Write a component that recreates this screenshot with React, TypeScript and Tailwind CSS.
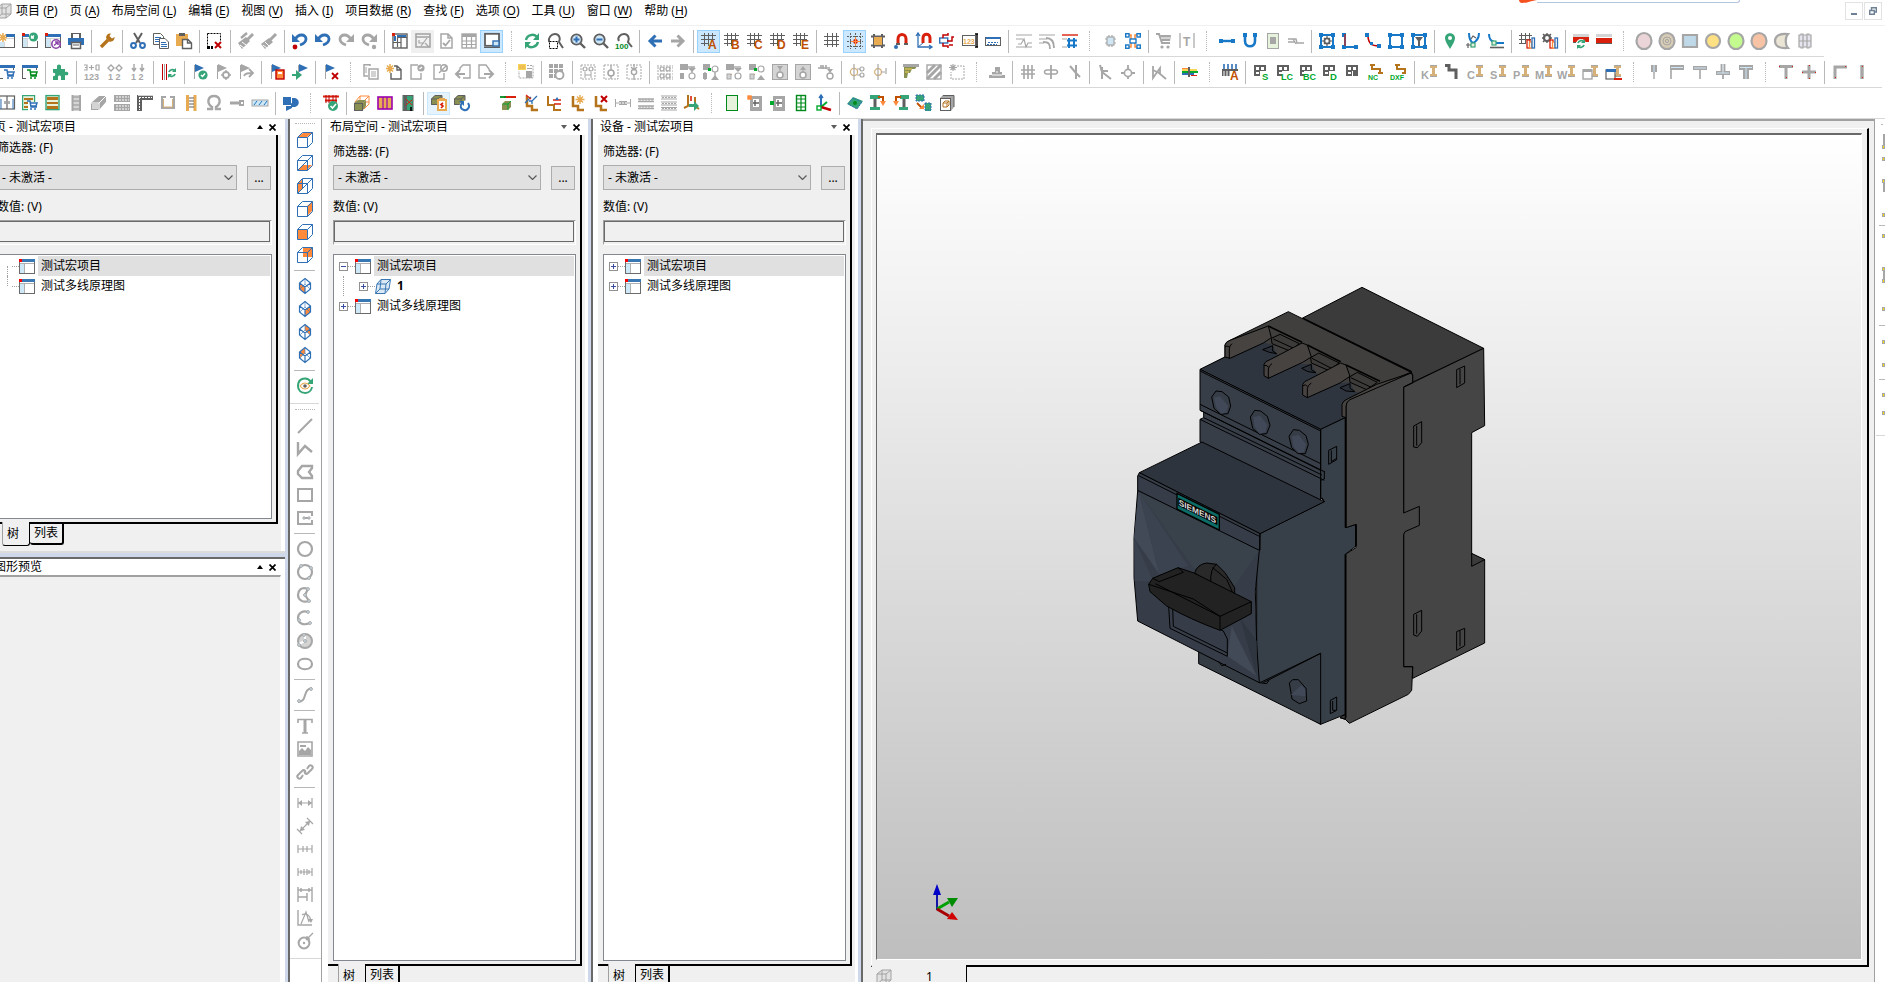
import React from "react";

const COLORS: Record<string, string> = {
  "-": "none",
  g: "#a6a6a6",
  d: "#5f5f5f",
  b: "#2f6fb5",
  r: "#d8200c",
  R: "#c00000",
  n: "#35a477",
  N: "#008a1c",
  e: "#00a82c",
  o: "#e8ab52",
  O: "#ff8a3c",
  w: "#ffffff",
  l: "#cfe6f5",
  y: "#f5d458",
  t: "#b5731c",
  T: "#c05000",
  k: "#000000",
  p: "#8b45a8",
  P: "#9a00b0",
  c: "#1878c8",
  m: "#d6b079",
  s: "#d4d4d4",
  f: "#f2f2f2",
  v: "#8a8f52",
  i: "#e6f2dc",
};

/*
 * Icons are written in a small notation, parts separated by ";":
 *   s color width path                  stroked path
 *   h color path                        dashed path
 *   f color path                        filled path
 *   r fill stroke width x y w h         rectangle
 *   c fill stroke width cx cy radius    circle
 *   t color x y size label              text
 */
const Glyph = ({ code, size = 16 }: { code: string; size?: number }) => (
  <svg viewBox="0 0 16 16" width={size} height={size} className="shrink-0 overflow-visible" aria-hidden="true">
    {code.split(";").map((raw, i) => {
      const p = raw.trim().split(" ");
      switch (p[0]) {
        case "s":
          return <path key={i} d={p.slice(3).join(" ")} stroke={COLORS[p[1]]} strokeWidth={p[2]} fill="none" />;
        case "h":
          return <path key={i} d={p.slice(2).join(" ")} stroke={COLORS[p[1]]} strokeDasharray="2 1" fill="none" />;
        case "f":
          return <path key={i} d={p.slice(2).join(" ")} fill={COLORS[p[1]]} />;
        case "r":
          return (
            <rect key={i} fill={COLORS[p[1]]} stroke={COLORS[p[2]]} strokeWidth={p[3]} x={p[4]} y={p[5]} width={p[6]} height={p[7]} />
          );
        case "c":
          return <circle key={i} fill={COLORS[p[1]]} stroke={COLORS[p[2]]} strokeWidth={p[3]} cx={p[4]} cy={p[5]} r={p[6]} />;
        case "t":
          return (
            <text key={i} x={p[2]} y={p[3]} fontSize={p[4]} fill={COLORS[p[1]]} fontWeight="700" fontFamily="Liberation Sans, sans-serif">
              {p.slice(5).join(" ")}
            </text>
          );
        default:
          return null;
      }
    })}
  </svg>
);

const WIN = "r w d 1 0.5 1.5 15 13;r b - 0 0 1 16 3;r r - 0 0 0 3 3;r l - 0 1 5 4 9;s s 1 M5.5 5V14M1 5.5H15";
const STAR = "s o 1.5 M4 0V9M0 4.5H8M1 1.5L7 7.5M7 1.5L1 7.5";
const GRID = "s d 1 M3.5 0V14M8.5 0V14M12.5 0V14M0 3.5H15M0 7.5H15M0 11.5H15";
const GRIDL = "s d 1 M3.5 0V13M7.5 0V13M11.5 0V7M0 2.5H15M0 6.5H14M0 10.5H8";
const GRIDS = "s d 1 M2.5 0V11M6.5 0V11M10.5 0V6M0 2.5H13M0 6.5H12M0 10.5H7";
const DOC = "f w M3 1H10L14 5V15H3Z;s g 1.5 M3 1H10L14 5V15H3Z M10 1V5H14";
const CUBE = "s b 1 M0.5 5.5L5.5 0.5H15.5V10.5L10.5 15.5H0.5ZM0.5 5.5H10.5V15.5M10.5 5.5L15.5 0.5";
const FLAG = "s g 1 M2.5 1V15";
const CART = "s b 1.5 M5 6H8L9 12H15M8 8H15L14 11H9;c b - 0 9 14 1;c b - 0 13 14 1";
const CARTN = "s N 1.5 M5 6H8L9 12H15M8 8H15L14 11H9;c N - 0 9 14 1;c N - 0 13 14 1";
const RX = "s R 1.8 M9 9L15 15M15 9L9 15";
const LENS = "c l d 1.8 6.5 6.5 5.2;s d 2.4 M10.5 10.5L15 15";
const MACRO = "f d M1 1H13V12H1Z;r w - 0 3 3 3 3;r w - 0 8 3 3 3;r w - 0 3 8 3 2;r w - 0 7 7 1 5";
const DRILL = "f m M8 1H15V4H13V10H15V13H8V10H10V4H8Z;s g 1 M8 1.5H15M8 12.5H15";
const LBR = "s t 2 M2 1V10H8V15H15";
const ANG = "s t 2.5 M4 1L4 11L9 11L9 15L15 15";
const BOX3 = "f v M0 4L4 0H11V6L7 10H0Z;s d 1 M0.5 4L4 0.5H11V6L7 9.5H0.5ZM0.5 4H7V9.5M7 4L11 0.5";
const TRACK = "r s g 1 2 0 12 15";
const HEX = "s b 1.2 M8 0.5L13.5 5V11L8 15.5L2.5 11V5ZM2.5 5L8 9L13.5 5M8 9V15;s b 0.6 M8 1V6L3 11M8 6L13 11";

const ICONS: Record<string, string> = {
  newProj: WIN + ";r w - 0 0 0 7 9;" + STAR,
  openProj: WIN + ";r w - 0 7 0 9 8;c n - 0 11.5 4 4.5;s w 1.3 M9.5 5L12 2.5M9.5 2.5V5H12",
  closeProj: WIN + ";r w - 0 6 7 9 8;c w p 1.6 11 11 4.2;s p 1.5 M9 12.5L12.5 9.5M10 9H13V12",
  print: "f d M3 0H13V5H3Z;r w - 0 5 1 6 4;f b M0 5H16V12H0Z;r w d 1.5 3.5 9.5 9 6;s d 1 M5 12H11",
  wrench: "s t 3.4 M2 14L9 7;f t M7 5C7 2 9 0 12 0.5L10.5 3L13 5.5L15.5 4C16 7 13 9.5 10 8.5Z",
  cut: "s d 2 M4 0L10 10M12 0L6 10;c - b 2 3.5 12.5 2.4;c - b 2 12.5 12.5 2.4",
  copy: "f w M1 1H8L10 3V11H1Z;s d 1 M0.5 0.5H7.5L10.5 3.5V11.5H0.5Z;s b 1 M2 4.5H8M2 6.5H8M2 8.5H6;f w M6 5H12L15 8V15H6Z;s d 1 M6.5 5.5H12L15.5 9V15.5H6.5Z;s b 1 M8 9.5H13M8 11.5H14M8 13.5H14",
  paste: "r o - 0 0 1 12 12;r d - 0 3 0 6 3;f w M6 6H12L15 9V15H6Z;s d 1.4 M6.5 6.5H12L15.5 10V15.5H6.5Z M11.5 7V10H15",
  selDel: "h k M0.5 0.5H13.5V8M0.5 0.5V14.5;r k - 0 0 13 3 3;r k - 0 4 13 2 3;s R 2 M8 9L14 15M14 9L8 15",
  brush1: "f g M0 10L8 4L12 8L4 16Z;s g 3 M9 7L15 1;s w 1 M2 12L6 15M4 9L8 12;s g 2.4 M3 5L9 0",
  brush2: "f g M0 11L8 5L12 9L4 16Z;s g 3 M9 7L15 1;s w 1 M2 12L6 15M4 9L8 13",
  undoDot: "s b 2.8 M3 7C6 0 14 1 14 6C14 9 11 11 8 12;f b M0 1V9H8Z;c R - 0 3 14 2.4",
  undo: "s b 2.8 M3 7C6 0 14 1 14 6C14 9 11 11 8 12;f b M0 1V9H8Z",
  redo: "s g 2.8 M13 7C10 0 2 1 2 6C2 9 5 11 8 12;f g M16 1V9H8Z",
  redoDot: "s g 2.8 M13 7C10 0 2 1 2 6C2 9 5 11 8 12;f g M16 1V9H8Z;c g - 0 13 14 2.2",
  winLay: "r w d 1.4 1 1 14 14;r b - 0 5 2 9 2;r r - 0 0 0 3 3;r b - 0 2 3 2 5;s d 1.2 M5.5 4.5V14M1 9.5H9V5M9 9.5V15M5 4.5H15",
  winGraph: "r f g 1.6 1 1 14 13;s g 1.6 M1 4H15;s g 1.2 M4 7V10H9M12 5L6 13M10 10L14 14",
  docCheck: DOC + ";s g 1.8 M5 10L7.5 12.5L12 7",
  table: "r w g 1.4 1 1 14 14;r g - 0 1 1 14 3;s g 1.2 M1 8H15M1 11.5H15M5.5 2V15M10.5 2V15",
  winActive: "r w d 1.8 1 0.8 14 12;r l b 1.4 9 8 6 5;s d 1 M0 14.5H16",
  refresh: "s n 2.4 M2 7C3 2 10 0 13 4M14 9C13 14 6 16 3 12;f n M15 0V7H9Z;f n M1 16V9H7Z",
  lensSel: "s d 2 M2 9C1 5 4 1 8 1C12 1 14 5 12 9L16 15;h k M2.5 8.5H10.5V15.5H2.5Z",
  zoomIn: LENS + ";s b 2 M6.5 3.5V9.5M3.5 6.5H9.5",
  zoomOut: LENS + ";s b 2 M3.5 6.5H9.5",
  zoom100: "s d 2 M3 8C1 5 4 1 8 1C12 1 14 5 12 9L16 14;t N -1 16 8 100",
  left: "s b 3 M3 8H15M8.5 2.5L3 8L8.5 13.5",
  right: "s g 3 M1 8H13M7.5 2.5L13 8L7.5 13.5",
  gA: GRIDL + ";t T 7 16 12 A",
  gB: GRIDL + ";t T 7 16 12 B",
  gC: GRIDL + ";t T 7 16 12 C",
  gD: GRIDL + ";t T 7 16 12 D",
  gE: GRIDL + ";t T 8 16 12 E",
  grid: GRID,
  gridSnap: "h d M3.5 0V16M8.5 0V16M13.5 0V16M0 3.5H16M0 8.5H16M0 13.5H16;c r - 0 8.5 8.5 2.4;s O 1 M8.5 4V13M4 8.5H13",
  gridObj: "s d 2 M4 1V15M12 1V15M1 3.5H15M1 12.5H15;r o - 0 4 4 8 8",
  magnet: "s r 3 M5 11V6C5 0 13 0 13 6V11;r d - 0 3 10 4 2;r d - 0 11 10 4 2;c b - 0 3 14 2",
  magnetAx: "s r 3 M7 10V5C7 0 14 0 14 5V10;s b 1.3 M2 1V14H15M0 3L2 0L4 3M13 12L16 14L13 16;s b 1 M2 14L7 10",
  conn: "r w b 1.4 0.7 5 8 5;s R 1.5 M4 5V2H9V0M4 10V13H9V15M8 8H13V4H15M14 12H10",
  n123: "r w d 1 0.5 2.5 13 10;t o 1 10.5 7 123;s k 1.4 M15 1V14M13 1H16M13 14H16",
  rulerB: "r w d 1 0.5 4.5 15 8;r b - 0 1 4 14 2;h b M3 9.5H13M2 11.5H12",
  wave1: "s g 1.2 M0 2H16M0 6H7M0 14H16M2 11H5L8 6L10 14L12 10H16",
  wave2: "s g 1.2 M0 2H16M0 6H8M0 10H5;s g 1.8 M4 9C10 9 11 11 11 16M7 5C13 5 15 9 15 15",
  wave3: "s r 1.4 M0 2H16;s g 1.2 M0 6H5M0 14H5;s c 2 M7 5V15M12 5V15M5 7.5H15M5 12.5H15",
  comp: "r l g 1.2 5 4 7 8;s g 1.2 M7 4V2M10 4V2M7 12V14M10 12V14M5 6H3M5 10H3M12 6H14M12 10H14",
  comp4: "s O 1.5 M4 2H6V14H4M12 2H10V14H12;r w c 1.4 5 6 6 4;r w c 1.4 0.7 0.7 3.3 3.3;r w c 1.4 12 0.7 3.3 3.3;r w c 1.4 0.7 12 3.3 3.3;r w c 1.4 12 12 3.3 3.3",
  cart: "s g 2 M0 1H3L6 10H14;f g M4 2H15L14 8H6Z;c g - 0 6 14 1.6;c g - 0 12 14 1.6;s w 1 M5 5H14",
  barT: "s g 1.2 M1 0V15M15 0V15;t g 4 13 12 T",
  lineH: "s c 2.4 M2 8H14;r c - 0 0 6 4 4;r c - 0 12 6 4 4",
  lineU: "s c 2.6 M3 3V8C3 15 13 15 13 8V3;r c - 0 1 0 4 4;r c - 0 11 0 4 4",
  rectG: "r i g 1 2.5 0.5 11 15;r g - 0 5 4 6 7",
  step: "s g 1.4 M0 6H8L9 10H16M0 9H7M5 6L8 11",
  cGear: "r w c 2 2 2 12 12;r c - 0 0 0 4 4;r c - 0 12 0 4 4;r c - 0 0 12 4 4;r c - 0 12 12 4 4;c w d 1.8 8 8 2.6;s d 1.2 M8 3V5M8 11V13M3 8H5M11 8H13M5 5L6 6M10 10L11 11M11 5L10 6M5 11L6 10",
  cL: "s c 2 M3 2V14H15;r c - 0 0 0 4 4;r c - 0 0 12 4 4;r c - 0 12 12 4 4;s r 1.2 M3 1V13",
  cCurve: "s R 1.6 M3 2C3 10 6 13 14 13;r c - 0 0 0 4 4;r c - 0 12 11 4 4;r c - 0 5 9 3 3",
  cSq: "r w c 2 2 2 12 12;r c - 0 0 0 4 4;r c - 0 12 0 4 4;r c - 0 0 12 4 4;r c - 0 12 12 4 4",
  cFun: "r w c 2 2 2 12 12;r c - 0 0 0 4 4;r c - 0 12 0 4 4;r c - 0 0 12 4 4;r c - 0 12 12 4 4;f d M4 4H12L9 8V13H7V8Z",
  pin: "f n M8 16C5 11 3 8 3 5C3 -1.5 13 -1.5 13 5C13 8 11 11 8 16Z;c w - 0 8 5 2",
  vee: "s c 2 M4 0C4 5 5 8 8 10M14 0C14 5 12 8 8 10;s d 1.2 M1 12H6M3 10V15M11 5L8 3L6 6;r i n 1.2 6 10 4 4",
  ell: "s c 2 M1 1C1 6 3 8 6 9M7 10H16;s d 1.6 M2 14.5H16;r i n 1.2 4 8 4 4",
  books: GRIDS + ";r w r 1.3 8 7 3 8;r w O 1.3 10.5 9 2.5 6;r w b 1.3 13 5 2.5 10",
  gearBooks: "c w d 2.2 5 5 3;s d 1.4 M5 0V2M5 8V10M0 5H2M8 5H10M1 1L3 3M7 7L9 9M9 1L7 3M1 9L3 7;r w r 1.3 8 7 3 8;r w O 1.3 10.5 9 2.5 6;r w b 1.3 13 5 2.5 10",
  redRef: "r s - 0 0 1 16 3;r r - 0 0 4 16 5;r d - 0 0 9 3 1;c w - 0 8 11 5;s n 1.8 M5 10C6 7 10 7 11 9M11 12C10 15 6 15 5 13;f n M12 6V10H8Z;f n M4 16V12H8Z",
  redBar: "r s - 0 0 1 16 3;r r - 0 0 5 16 5;r d - 0 0 10 16 1",
  cab: "r w d 1.2 0.5 1 15 13;s d 1.2 M8 1V14;s b 1 M2 14V4M14 14V4;s d 1 M6 6V9M10 6V9",
  docCart: "r i n 1.2 0.6 0.6 12 14;r t - 0 2 3 9 2;r t - 0 2 7 6 2;r t - 0 2 11 5 2;r w - 0 6 7 10 9;" + CART,
  rack: "r i n 1.4 1 0.6 13 14;r t - 0 2 2 11 3;r t - 0 2 7 11 2;r t - 0 2 11 11 3",
  rail: "r s - 0 4 0 9 16;s g 2 M4.5 0V16M12 0V16;s g 1.4 M5 2H12M5 6H12M5 10H12M5 14H12",
  boxG: "f g M0 8L8 1H15V7L8 15H0Z;s w 1 M0 8H8L15 1M8 8V15;r s - 0 1 9 6 5",
  plates: "r g - 0 0 0 16 7;r g - 0 0 9 16 7;h w M2 2H15M2 5H15M2 11H15M2 14H15",
  corner: "f d M0 0H16V5H5V16H0Z;h w M2 2.5H15M2.5 2V15;s s 1 M16 0.5H1",
  brack: "s g 2 M6 2H2V13H14V2H10;s m 1 M3.5 4V12H12.5V4",
  railO: "r w - 0 3 0 10 16;s o 3 M4.5 0V16M12 0V16;s d 1.2 M6 3H11M6 6H11M6 9H11M6 12H11",
  omega: "s g 2.4 M1 14H6V12C0 8 2 1 8 1C14 1 16 8 10 12V14H15",
  screw: "s g 3 M1 8H10;r g - 0 10 5 5 6;r w - 0 12 7 2 2",
  strip: "r l g 1 0 5 16 6;s c 1 M2 10L5 6M7 10L10 6M12 10L15 6",
  shapes: "r b - 0 0 2 8 8;f b M9 3H12C17 4 17 11 12 12H9Z;f b M3 16V11L9 8V13Z;s w 1 M8.5 2V8M0 10.5H8",
  redCheck: "s r 2 M0 1.5H16M2 5.5H14;s R 1 M3 0V8M6 0V8M10 0V8M13 0V8;c n - 0 10 11 5;s w 1.6 M7.5 11L9.5 13L13 9",
  boxO: "s O 1 M6 1H15V9M6 1L1 7M15 1L9 7M6 1V7M15 9L10 14M6 7H15;r v d 1 0.5 8.5 8 7;f v M0 8L4 5H12L9 8Z;f v M9 8L12 5V11L9 15Z",
  purple: "r o P 1.6 1 2 14 12;s P 1.2 M6 2V14M10 2V14",
  teal: "r n d 1 3 0.5 10 15;r d - 0 4 0 3 16;s r 1 M6 4L12 10M6 10L12 5;s k 1.6 M11 12V16",
  boxClip: BOX3 + ";r w o 2 7 5 8 10;r o - 0 8 3 6 3;s r 1.6 M12 8L10 9.5L12 11L10 13",
  boxRef: BOX3 + ";c w - 0 11 11 5.5;s b 2 M14 8C17 12 13 16 10 15C6 14 6 10 8 8;f b M5 6H10V11Z",
  redGrn: "s r 2 M4 2H16;s N 1.8 M0 2H6;f v M2 9L5 6H11V12L8 15H2Z;s e 1 M2.5 9H8V15M8 9L11 6",
  lb: ANG + ";s b 1.3 M2 8L8 2M14 1L8 7M6 6H9V9;s r 1.2 M3 0L8 4",
  lr: LBR + ";s r 1.6 M7 5H15M8 9H15;f b M9 5L11 2L13 5Z",
  lstar: ANG + ";s o 1.4 M11 0V9M6.5 4.5H15.5M8 1.5L14 7.5M14 1.5L8 7.5",
  lx: ANG + ";s R 2 M9 1L15 7M15 1L9 7",
  dim1: "s g 1 M0.5 4V12M15.5 4V12M1 8H15;r g - 0 4 6 8 4;h w M4 8H12",
  dim2: "s g 1.3 M0 4H16M0 6.5H16M0 11H16M0 13.5H16;h g M1 5H15M1 12H15",
  dim3: "s g 1.1 M0 1H16M0 4H16M0 7H16M0 10H16M0 12.5H16M0 15H16;h g M1 2.5H15M1 8.5H15M1 13.5H15",
  plug: "s t 2 M4 0V11L0 13M11 2V11L15 14;s r 1.6 M7 1V6;f n M5 9H10V6L15 11L10 16V12H5Z",
  gRect: "r i N 1 2.5 0.5 11 15",
  gOr: "r g - 0 3 1 12 15;r O O 1.4 1 1 3 3;r w - 0 6 4 6 8;s d 1.4 M8 5V11M6 8H12",
  gGr: "r g - 0 3 1 12 15;r e - 0 0 6 4 4;r w - 0 6 4 6 8;s d 1.4 M8 5V11M6 8H12",
  gGrid: "r w N 1.4 3.5 0.5 9 15;s N 1.2 M8 1V15M4 4H12M4 8H12M4 12H12",
  axes: "s b 2 M5 12V1;s b 1.4 M3 3L5 0L7 3;s e 2 M5 12L11 7;s R 2.4 M5 12L15 15;r w e 1.4 1 11 4 4",
  diam: "f n M0 9L6 2L16 6L10 14Z;h b M1 9L6 3L15 7L10 14Z;c N - 0 8 8 2",
  pipe1: "r n - 0 0 0 10 4;s d 3 M5 4V13;r n - 0 0 12 10 3;s T 2 M8 2H13V7;f O M10 6H16L13 11Z",
  pipe2: "r n - 0 7 0 9 4;s d 3 M11 4V12;r n - 0 6 12 9 3;s T 2 M8 2H3V7;f O M0 6H6L3 11Z",
  sqs: "r n - 0 0 0 8 6;r n - 0 9 8 6 8;h b M0 0H8V6H0ZM9 8H15V15H9Z;s T 1.8 M1 8L6 13;f O M3 14H8V9Z",
  cubeO: "f g M1 3L4 0H15V12L12 16H1Z;r w d 1 1.5 3.5 10 12;s t 1 M4 8L6 6H10V10L8 12H4ZM4 8H8V12M8 8L10 6;s d 1 M4 0.5H15V12",
};

const shape = (fill: string, d: string) => (
  <svg viewBox="0 0 16 16" width={16} height={16} className="shrink-0 overflow-visible" aria-hidden="true">
    <path d={d} fill={fill} stroke="#a6a6a6" strokeWidth="2.2" />
  </svg>
);
const ROUND = "M8 0A7.5 8 0 1 1 8 16A7.5 8 0 1 1 8 0Z";

const MORE: Record<string, string> = {
  winCart: "r w d 1 0.5 1.5 14 13;r b - 0 0 1 16 3;r w - 0 4 6 12 10;" + CART,
  winCartN: "r w d 1 0.5 1.5 14 13;r b - 0 0 1 16 3;r w - 0 4 6 12 10;" + CARTN,
  puzzle: "f n M0 5H4V3C3 -0.5 9 -0.5 8 3V5H12V8C16.5 6 16.5 13 12 11V16H8V13C8 11 5 11 5 13V16H0V12C3 13 3 8 0 9Z",
  num1: "s g 1.2 M0 1H3V6H0M1 3.5H3M5 3.5H10M7.5 1V6M12 1H15V6H12M12 1V6;t g 0 16 9 123",
  num2: "s g 1.3 M1 4L4 1L7 4L4 7ZM9 4L12 1L15 4L12 7Z;t g 1 16 9 1 2",
  num3: "s g 1.4 M4 0V7M12 0V7M2 4L4 7L6 4M10 4L12 7L14 4;t g 1 16 9 1 2",
  barsRef: "s R 1 M1.5 0V16M5.5 0V16;s g 1 M3.5 0V16;s n 1.8 M8 8C9 5 13 5 14 7M14 10C13 13 9 13 8 11;f n M15 4V8H11Z;f n M7 14V10H11Z",
  flagOk: FLAG + ";f b M3 0L12 4L3 8Z;c n - 0 11 11 4.6;s w 1.5 M9 11L10.5 12.5L13 9.5",
  flagGear: FLAG + ";f g M3 0L12 4L3 8Z;c w g 1.8 11 11 3;s g 1.4 M11 6V8M11 14V16M6 11H8M14 11H16",
  flagArr: FLAG + ";f g M3 0L12 4L3 8Z;s g 1.8 M6 12C7 9 10 9 14 9M11 5L15 9L11 13",
  flagBook: FLAG + ";f b M3 0L12 4L3 8Z;r O R 1.4 7 6 8 9;r w - 0 9 8 4 2",
  flagIn: "s g 1 M6.5 1V9;f b M7 0L16 4L7 8Z;s n 2 M0 11H7;f n M4 6L10 11L4 16Z",
  flagX: FLAG + ";f b M3 0L12 4L3 8Z;" + RX,
  docList: "f w M1 1H7V12H1Z;s g 1.5 M7 2V0.7H1V12H5;r w g 1.5 6 5 9 10;s g 1 M8 8H13M8 10H13M8 12H13M3 3V9",
  docStar: "f w M5 1H11L15 5V15H5Z;s d 1.4 M8 2H11L15 5.5V15H5V9M11 2V6H15;" + STAR,
  docRef: "s g 1.4 M9 1H2V15H12V9;c g - 0 12 4 3.6;s w 1.2 M10.5 5L13 3",
  docArr: "s g 1.4 M9 1H2V15H12V9;c w g 1.6 12 4 3.2;s g 1.4 M10 6L14 2M7 9L11 5",
  docL: "s g 1.4 M5 6V4L8 1H15V14H8;s g 2 M1 10H10M5 6L1 10L5 14",
  docR: "s g 1.4 M11 6V5L8 1H1V14H8;s g 2 M6 10H14M11 6L15 10L11 14",
  note: "h g M9 1.5H15V14H1V7;r y - 0 0 0 8 6;s o 1 M1 2H7M1 4H7;r g - 0 8 7 6 7;s g 1 M9 4.5H14",
  gridGear: "r g - 0 0 0 14 14;s w 1 M4.5 0V14M9.5 0V14M0 4.5H14M0 9.5H14;c w g 1.8 10.5 11 4",
  dotA: "h g M1 1H15V15H1Z;c w g 1.2 5 5 2;c w g 1.2 11 5 2;s g 1 M5 8V14M11 8V14M5 11H11",
  dotB: "h g M1 1H15V15H1Z;c w g 1.6 8 9 3;s g 1.3 M8 1V6M8 12V15",
  dotC: "h g M1 1H15V15H1Z;c w g 1.4 8 8 2.6;s g 1.3 M8 0V5M8 11V16M5 3L8 6L11 3",
  dbl: "h g M0 2H16M0 4H16M0 7H16M0 10H16M0 13H16M0 15H16;c w g 1.2 5 5 2;c w g 1.2 11 5 2;c w g 1.2 5 12 2;c w g 1.2 11 12 2",
  mA: "r g - 0 0 0 8 6;s g 1.4 M8 3H15M12 3V9;r g - 0 0 9 4 6;c w g 1.2 12 12 3;f g M8 4H16L12 8Z",
  mB: "r g - 0 0 0 7 6;r e - 0 5 4 3 3;c w g 1.2 12 5 3;s g 1.4 M2 8V16M12 8V12;r g - 0 0 9 4 6;f g M8 16L12 11L16 16Z",
  mC: "r g - 0 0 0 8 6;s g 1.4 M8 3H15;f g M8 4H16L12 8Z;s O 1 M1 15L6 10;r s g 1 1 10 4 5;c w g 1.2 12 12 3",
  mD: "r g - 0 0 0 7 6;r e - 0 5 4 3 3;c w g 1.2 12 5 3;s O 1 M1 15L6 10;r s g 1 1 10 4 5;f g M8 16L12 11L16 16Z",
  mE: "r s g 1 0.5 0.5 15 15;c w g 1.6 8 11 3;f g M5 2H11L8 6Z;s g 1 M8 5V9",
  mF: "r s g 1 0.5 0.5 15 15;c w g 1.6 8 11 3;f g M5 6H11L8 2Z;s g 1 M8 5V9",
  mG: "s g 1.6 M0 4H3V1M5 5V1M8 5V1M3 4H12;c w g 1.4 12 12 3;f g M9 5H15L12 9Z",
  pA: "c w m 1.2 5 8 3.6;s g 1.2 M5 0V16M8 5H12M8 11H12;c w g 1.2 13 5 2;c w g 1.2 13 11 2",
  pB: "c w m 1.2 6 8 3.4;s g 1.2 M6 0V16M9 8H13M14 4V10",
  tri: "f v M1 1H15L12 5H9L7 9H5L4 14H1Z;r g - 0 0 0 16 3;s y 1 M2 5H9M2 8H6",
  hatch: "r w g 1.4 1 1 14 14;s g 3 M1 9L9 1M1 15L15 1M8 15L15 8",
  dotStar: "h g M8 2H15V15H2V8;s g 1.2 M4 0V7M0 3.5H8M1.5 1L6.5 6M6.5 1L1.5 6",
  bell: "f g M6 3H11V8H13V11H16V14H0V11H3V8H6Z;s w 1 M3 11H13M7 8H9",
  l3: "s g 1.6 M4 1V15M8 1V15M12 1V15;s g 1.4 M1 6H15M1 10H15",
  phi: "s g 1.8 M8 1V15;s g 1.6 M3 6H13M3 10H13M3 6C1 7 1 9 3 10M13 6C15 7 15 9 13 10",
  slash: "s g 2 M10 1V15M4 2L10 9M10 9L14 13",
  tapA: "s g 2 M3 1L5 8L14 15M5 7H11M5 3V15",
  crossC: "s g 1.8 M8 1V15M1 9H15;c w g 1.6 8 9 3.6",
  tapB: "s g 1.8 M2 2V14L9 4V10M2 6L8 9L15 15",
  rainbow: "s y 2 M0 6H15;s O 1 M0 4.5H7;s e 2 M0 8H16;s b 2 M0 10H12;s r 1 M9 11.5H15;s d 2 M7 3V13",
  tray: "r d - 0 0 5 16 7;s b 1.6 M2 0V5M6 0V5M10 0V5M14 0V5;s w 1 M2 7V12M5 7V12M8 7V12;r w - 0 8 7 8 9;t T 8 16 12 A",
  mS: MACRO + ";r w - 0 8 7 8 9;t e 9 16 9.5 S",
  mLC: MACRO + ";r w - 0 6 7 9 9;t e 5 16 9 LC",
  mBC: MACRO + ";r w - 0 5 7 10 9;t e 4 16 9 BC",
  mD2: MACRO + ";r w - 0 8 7 8 9;t e 8 16 9.5 D",
  m0: MACRO,
  nc: "s t 2 M4 1V5H12V9M2 1H7M10 9H15;t e 0 16 7 NC",
  dxf: "s t 2 M6 1V5H14V9M4 1H9M11 9H15;t e -1 16 7 DXF",
  fK: DRILL + ";t g -1 15 11 K",
  fArr: "s d 3 M0 1.5H4V6H11V15",
  fC: DRILL + ";t g -1 15 11 C",
  fS: DRILL + ";t g -1 15 11 S",
  fP: DRILL + ";t g -1 15 11 P",
  fM: DRILL + ";t g -2 15 11 M",
  fW: DRILL + ";t g -3 15 11 W",
  fWin: DRILL + ";r w g 1.4 0 6 9 9;r g - 0 0 5 9 3",
  fWinR: DRILL + ";r w d 1.2 0 6 9 9;r b - 0 0 5 10 3;r r - 0 8 14 8 2",
  q1: "r g - 0 5 1 6 7;s l 1 M8 1V10;s g 1.4 M8 8V15",
  q2: "r g - 0 1 1 14 5;s l 1 M2 3.5H14;s g 1.6 M2 5V15",
  q3: "r g - 0 1 2 14 4;s l 1 M2 4H14;s g 1.6 M8 5V15",
  q4: "r g - 0 1 7 14 4;s l 1 M2 9H14M8 0V9;s g 1.8 M6.5 0V7M9.5 0V7M8 11V15",
  q5: "r g - 0 1 1 14 5;r g - 0 5 5 6 10;s l 1 M2 3.5H14M8 4V15",
  w1: "s g 3 M1 2.5H15M8 2V15;r r - 0 1 2 1 1;r r - 0 14 2 1 1;r r - 0 8 13 1 1",
  w2: "s g 3 M1 8H15M8 1V15;r r - 0 1 8 1 1;r r - 0 14 8 1 1;r r - 0 8 1 1 1;r r - 0 8 14 1 1",
  w3: "s g 3 M3 15V3H15;r r - 0 13 2 1 1;r r - 0 3 13 1 1",
  w4: "s g 3.4 M7 1V15;r r - 0 7 2 1 1;r r - 0 7 13 1 1",
};

const SIDE: Record<string, string> = {
  cu1: "f O M1 5L6 1H15L10 5Z;" + CUBE,
  cu2: "f O M1 15L6 10H15L10 15Z;" + CUBE + ";s b 1 M1 15L15 1",
  cu3: "f O M1 5L6 1V10L1 15Z;" + CUBE + ";s b 1 M1 15L15 1M5.5 1V10",
  cu4: "f O M10 5L15 1V10L10 15Z;" + CUBE,
  cu5: "f O M1 5H10V15H1Z;" + CUBE,
  cu6: "f O M6 1H15V10H6Z;" + CUBE,
  di1: "f O M2.5 5L8 9V15L2.5 11Z;" + HEX,
  di2: "f O M8 9L13.5 5V11L8 15Z;" + HEX,
  di3: "f O M8 1L13.5 5V11L8 6Z;" + HEX,
  di4: "f O M8 1L2.5 5V11L8 6Z;" + HEX,
  eye: "s n 2 M15 9C14 17 1 17 1 8C1 0 10 -2 14 4;f n M16 0V6H10Z;f w M3 8L8 5L13 8L8 11Z;s o 1.2 M3 8C6 4 10 4 13 8C10 12 6 12 3 8Z;c d - 0 8 8 1.8",
  line: "s g 2 M1 15L15 1",
  poly: "s g 2.4 M1 1V13L8 5L15 11",
  pgon: "s g 2.4 M15 2H5L1 7V10L5 14H15V12L12 8L15 4Z",
  rect: "s g 2 M1 2H15V14H1Z",
  rect2: "s g 2 M15 10V14H1V2H15V6M7 8H12;c l g 1 7 8 1.2;c l g 1 12 8 1.2",
  c1: "c - g 2.2 8 8 7",
  c2: "c - g 2.2 8 8 7;c l g 1 4 2 1.4;c l g 1 14 4 1.4;c l g 1 12 14 1.4",
  c3: "s g 2.2 M11 2C4 -1 1 4 1 8C1 13 6 16 12 14L8 8L11 2;c l g 1 11 2 1.4;c l g 1 8 8 1.4;c l g 1 12 14 1.4",
  c4: "s g 2.2 M11 2C6 0 1 3 1 8C1 13 6 16 13 13;c l g 1 11 2 1.4;c l g 1 2 10 1.4;c l g 1 13 13 1.4",
  c5: "c s g 2 8 8 7;s w 2 M2 11L8 8V2;c l g 1 7 2 1.4;c l g 1 8 8 1.4;c l g 1 2 12 1.4",
  el: "s g 2.2 M1 8C1 1 15 1 15 8C15 15 1 15 1 8Z",
  spl: "s g 2 M1 15C11 15 5 2 15 1;c l g 1 2 14 1.4;c l g 1 14 2 1.4",
  txt: "s g 1.6 M1 5V1.5H15V5M5 15H11;s g 3 M8 1V15",
  img: "s g 1.6 M1 1H15V15H1Z;f g M2 14V10L5 7L8 10L11 6L14 9V14Z;f g M3 4H9V6H3Z",
  link: "s g 2 M10 5L12 2C14 0 17 3 15 5L11 9C9 11 7 9 8 8M6 11L4 14C2 16 -1 13 1 11L5 7C7 5 9 7 8 8",
  d1: "s g 1.2 M1 3V13M15 3V13M1 8H15;f g M1 8L5 5V11ZM15 8L11 5V11Z",
  d2: "s g 1.2 M3 13L13 3M0 11L5 16M10 0L16 6;f g M3 13L4 8L8 12ZM13 3L8 4L12 8Z",
  d3: "s g 1.2 M1 4V12M15 4V12M6 5V11M10 5V11M1 8H15",
  d4: "s g 1.2 M1 4V12M15 4V12M4 6V10M7 5V11M10 5V11M12 6V10M1 8H15",
  d5: "s g 1.4 M1 0V15M15 0V15M1 3H15M1 10H10M10 6V14M4 1V5M12 1V5",
  d6: "s g 1.4 M1 0V15H15;s g 1.2 M4 14L9 2L12 12M5 5C9 2 13 5 14 11;f g M11 9H16L14 13Z",
  d7: "c w g 2 7 10 5.4;c g - 0 7 10 1.2;s g 1.4 M9 7L16 0M10 3V6H13",
};

const SHAPES: Record<string, React.ReactNode> = {
  g1: shape("#ecd5d8", ROUND),
  g2: (
    <svg viewBox="0 0 16 16" width={16} height={16} className="shrink-0 overflow-visible" aria-hidden="true">
      <path d={ROUND} fill="#d8ccb4" stroke="#a6a6a6" strokeWidth="2.2" />
      <circle cx="8" cy="8" r="4" fill="none" stroke="#a6a6a6" />
      <circle cx="8" cy="8" r="1.6" fill="none" stroke="#a6a6a6" />
    </svg>
  ),
  g3: shape("#bfd9e8", "M1 2H15V14H1Z"),
  g4: shape("#ffe083", "M8 1A7 7 0 1 1 8 15A7 7 0 1 1 8 1Z"),
  g5: shape("#c3fb8f", ROUND),
  g6: shape("#f8c3a4", ROUND),
  g7: shape("#ebe5d6", "M14 1C4 0 1 4 1 8C1 12 4 16 14 15C11 12 11 4 14 1Z"),
  g8: (
    <svg viewBox="0 0 16 16" width={16} height={16} className="shrink-0 overflow-visible" aria-hidden="true">
      <path
        d="M2 2H4V1H6V2H10V1H12V2H14V14H12V15H10V14H6V15H4V14H2ZM6 2V14M10 2V14M2 8H14"
        fill="#e4e4ee"
        stroke="#a6a6a6"
        strokeWidth="1.2"
      />
    </svg>
  ),
};

const ALL: Record<string, string> = { ...ICONS, ...MORE, ...SIDE };

const HILITE: Record<string, string> = {
  winActive: "bg-[#cce8ff] border border-[#99d1ff]",
  gA: "bg-[#cce8ff] border border-[#99d1ff]",
  gridSnap: "bg-[#cce8ff] border border-[#99d1ff]",
  winGraph: "bg-[#f0f0f0]",
  boxClip: "bg-[#e5f3ff] border border-[#cce8ff]",
};

const ROW1 =
  "newProj openProj closeProj print | wrench | cut copy paste | selDel | brush1 brush2 | undoDot undo redo redoDot | winLay winGraph docCheck table winActive : refresh lensSel zoomIn zoomOut zoom100 | left right | gA gB gC gD gE | grid gridSnap gridObj magnet magnetAx conn n123 rulerB | wave1 wave2 wave3 : comp comp4 | cart barT : lineH lineU rectG step | cGear cL cCurve cSq cFun | pin vee ell | books gearBooks | redRef redBar : g1 g2 g3 g4 g5 g6 g7 g8";
const ROW2 =
  "winCart winCartN | puzzle | num1 num2 num3 | barsRef | flagOk flagGear flagArr | flagBook flagIn | flagX : docList docStar docRef docArr docL docR : note | gridGear | dotA dotB dotC | dbl mA mB mC mD mE mF mG | pA pB | tri hatch dotStar : bell | l3 phi slash | tapA crossC | tapB | rainbow : tray | mS mLC mBC mD2 m0 nc dxf | fK fArr fC fS fP fM fW fWin fWinR : q1 q2 q3 q4 q5 : w1 w2 | w3 w4";
const ROW3 =
  "cab docCart rack rail boxG plates corner brack railO omega screw strip | shapes : redCheck | boxO purple teal | boxClip boxRef _ redGrn lb lr lstar lx dim1 dim2 dim3 plug : gRect gOr gGr gGrid axes | diam pipe1 pipe2 sqs cubeO";
const COLUMN =
  "cu1 cu2 cu3 cu4 cu5 cu6 | di1 di2 di3 di4 | eye : line poly pgon rect rect2 | c1 c2 c3 c4 c5 el | spl | txt img link | d1 d2 d3 d4 d5 d6 d7";

const ToolButton = ({ id }: { id: string }) => (
  <button
    type="button"
    aria-label={id}
    className={`flex h-[23px] w-[23px] shrink-0 items-center justify-center ${HILITE[id] ?? ""}`}
  >
    {SHAPES[id] ?? <Glyph code={ALL[id]} />}
  </button>
);

const ToolRow = ({ items }: { items: string }) => (
  <div role="toolbar" className="-ml-[5px] flex h-[31px] w-fit items-center border-b border-[#d8d8d8] pr-2">
    {items.split(" ").map((id, i) => {
      if (id === "|")
        return (
          <span key={i} className="flex w-2 shrink-0 justify-center">
            <span className="h-[23px] w-px bg-[#b8b8b8]" />
          </span>
        );
      if (id === ":")
        return (
          <span key={i} className="flex w-[17px] shrink-0 justify-center">
            <span className="h-5 border-l border-dotted border-[#b8b8b8]" />
          </span>
        );
      if (id === "_") return <span key={i} className="w-[23px] shrink-0" />;
      return <ToolButton key={i} id={id} />;
    })}
  </div>
);

const MENUS: [string, string][] = [
  ["项目", "P"],
  ["页", "A"],
  ["布局空间", "L"],
  ["编辑", "E"],
  ["视图", "V"],
  ["插入", "I"],
  ["项目数据", "R"],
  ["查找", "F"],
  ["选项", "O"],
  ["工具", "U"],
  ["窗口", "W"],
  ["帮助", "H"],
];

const CubeGray = () => (
  <svg viewBox="0 0 16 16" width={16} height={16} className="shrink-0" aria-hidden="true">
    <path d="M1 5L6 1H15V11L10 15H1Z" fill="#e2e2e2" />
    <path d="M1 5L6 1H15V11L10 15H1ZM1 5H10V15M10 5L15 1M6 1V11H15M6 11L1 15" fill="none" stroke="#a2a2a2" />
  </svg>
);

const MenuBar = () => (
  <header className="flex h-[26px] shrink-0 items-start border-b border-[#f0f0f0]">
    <div className="-ml-1 flex h-[22px] w-5 items-center">
      <CubeGray />
    </div>
    <nav className="flex h-[22px] items-center gap-3">
      {MENUS.map(([label, key]) => (
        <button key={key} type="button" className="whitespace-nowrap leading-4">
          {label} (<span className="underline underline-offset-2">{key}</span>)
        </button>
      ))}
    </nav>
    <div className="ml-auto mr-[105px] flex w-[221px] items-start">
      <svg viewBox="0 0 18 3" width={18} height={3} aria-hidden="true">
        <path d="M0 0H18C12 1 8 3 3 3C1 3 0 1 0 0Z" fill="#f4511e" />
      </svg>
      <span className="h-[3px] flex-1 rounded-br-sm border-r border-b border-[#b4c6e0]" />
    </div>
    <div className="mt-[2px] mr-[3px] flex gap-px">
      <button type="button" aria-label="最小化" className="flex h-[18px] w-[18px] items-center justify-center border border-[#e2e2e2]">
        <span className="mt-[6px] h-[2px] w-[6px] bg-[#6d8094]" />
      </button>
      <button type="button" aria-label="还原" className="flex h-[18px] w-[18px] items-center justify-center border border-[#e2e2e2]">
        <svg viewBox="0 0 8 8" width={8} height={8} aria-hidden="true">
          <path d="M2.5 3V0.8H7.3V5H5.5M0.7 3.5H5.3V7.3H0.7Z" fill="none" stroke="#6d8094" strokeWidth="1.4" />
        </svg>
      </button>
    </div>
  </header>
);

const WinIcon = () => (
  <svg viewBox="0 0 16 15" width={16} height={15} className="shrink-0" aria-hidden="true">
    <rect x="0.5" y="0.5" width="15" height="14" fill="#fff" stroke="#6b6b6b" />
    <rect x="1" y="4" width="4" height="10" fill="#cfe8f8" />
    <path d="M1 4.5H15M5.5 5V14" stroke="#b0b0b0" />
    <rect width="16" height="3" fill="#3a78b4" />
    <rect width="3" height="3" fill="#ff0000" />
  </svg>
);

const CubeBlue = () => (
  <svg viewBox="0 0 16 15" width={16} height={15} className="shrink-0" aria-hidden="true">
    <path d="M1 5L5 1H15L14 10L10 14H1Z" fill="#dbe9f5" />
    <path d="M2 5L6 0.5H15.5L14 10L10 14.5H0.5ZM2 5H11L15.5 0.5M11 5L10 14.5M6 0.5L5 10H14M5 10L0.5 14.5" fill="none" stroke="#3a78b4" />
  </svg>
);

type Node = { label: string; depth: number; toggle?: "+" | "-"; cube?: boolean; selected?: boolean };

const Toggle = ({ kind }: { kind: "+" | "-" }) => (
  <button
    type="button"
    aria-label={kind === "+" ? "展开" : "折叠"}
    className="flex h-[9px] w-[9px] shrink-0 items-center justify-center border border-[#919191] bg-white"
  >
    <svg viewBox="0 0 5 5" width={5} height={5} aria-hidden="true">
      <path d={kind === "+" ? "M0 2.5H5M2.5 0V5" : "M0 2.5H5"} stroke="#3b4fa0" />
    </svg>
  </button>
);

const Tree = ({ nodes }: { nodes: Node[] }) => (
  <ul role="tree" className="min-h-0 flex-1 border border-[#828790] bg-white p-px">
    {nodes.map((n, i) => (
      <li key={i} role="treeitem" aria-selected={!!n.selected} className="flex h-5 items-center pl-1">
        {n.depth > 0 && (
          <span className="flex w-5 shrink-0 self-stretch pl-1">
            <span className="border-l border-dotted border-[#a0a0a0]" />
          </span>
        )}
        {n.toggle ? (
          <Toggle kind={n.toggle} />
        ) : (
          <span className={`flex w-[9px] shrink-0 self-stretch pl-1 ${i === 0 ? "items-end" : "items-start"}`}>
            <span className="h-[10px] flex-1 border-l border-dotted border-[#a0a0a0]" />
          </span>
        )}
        <span className="w-[7px] shrink-0 border-t border-dotted border-[#a0a0a0]" />
        {n.cube ? <CubeBlue /> : <WinIcon />}
        <span
          className={`ml-[3px] flex flex-1 items-center self-stretch whitespace-nowrap pl-[3px] ${n.selected ? "bg-[#e0e0e0]" : ""} ${
            n.cube ? "font-bold" : ""
          }`}
        >
          {n.label}
        </span>
      </li>
    ))}
  </ul>
);

const CloseMark = () => (
  <svg viewBox="0 0 7 7" width={7} height={7} aria-hidden="true">
    <path d="M0.5 0.5L6.5 6.5M6.5 0.5L0.5 6.5" stroke="#000" strokeWidth="1.7" />
  </svg>
);

const PanelTitle = ({ title, up, className }: { title: string; up?: boolean; className: string }) => (
  <div className={`flex h-4 shrink-0 items-center bg-white pr-px pl-[2px] ${className}`}>
    <h2 className="flex-1 whitespace-nowrap leading-4">{title}</h2>
    <button type="button" aria-label="窗口位置" className="flex w-[10px] items-center justify-center">
      <svg viewBox="0 0 6 4" width={6} height={4} aria-hidden="true">
        <path d={up ? "M0 4L3 0L6 4Z" : "M0 0H6L3 4Z"} fill={up ? "#000" : "#5c5c5c"} />
      </svg>
    </button>
    <button type="button" aria-label="关闭" className="flex w-[15px] items-center justify-center">
      <CloseMark />
    </button>
  </div>
);

const Tabs = ({ tall }: { tall?: boolean }) => (
  <div role="tablist" className={`flex shrink-0 items-start overflow-visible pl-[10px] ${tall ? "h-[27px]" : "h-4"}`}>
    <button
      role="tab"
      type="button"
      aria-selected="true"
      className="relative -mt-[2px] h-6 w-[28px] rounded-b-[3px] border-r border-b border-l border-black border-l-[#a0a0a0] bg-[#f0f0f0] pl-1 text-left"
    >
      树
    </button>
    <button role="tab" type="button" aria-selected="false" className="-mt-px h-[22px] w-[34px] rounded-b-[3px] border-r-2 border-b-2 border-black">
      列表
    </button>
  </div>
);

const Panel = ({ id, title, nodes, up, className }: { id: string; title: string; nodes: Node[]; up?: boolean; className: string }) => (
  <section className={`flex min-h-0 flex-col overflow-clip bg-[#f0f0f0] ${className}`}>
    <PanelTitle title={title} up={up} className="mr-0" />
    <div className={`mr-[3px] flex min-h-0 flex-1 flex-col border-r-2 border-b-2 border-black pr-1 pb-[3px] pl-[5px] ${up ? "pt-[5px]" : "pt-[9px]"}`}>
      <label htmlFor={`${id}-filter`} className="leading-4">
        筛选器: (F)
      </label>
      <div className={`flex items-end gap-[10px] pr-px ${up ? "mt-[9px]" : "mt-[5px]"}`}>
        <div className="relative flex-1">
          <select
            id={`${id}-filter`}
            className="block h-[25px] w-full appearance-none border border-[#adadad] bg-[#e1e1e1] pl-1 leading-4 outline-none"
          >
            <option>- 未激活 -</option>
          </select>
          <svg viewBox="0 0 9 5" width={9} height={5} className="pointer-events-none absolute top-[10px] right-1" aria-hidden="true">
            <path d="M0.5 0.5L4.5 4.5L8.5 0.5" fill="none" stroke="#5a5a5a" strokeWidth="1.2" />
          </svg>
        </div>
        <button type="button" aria-label="编辑筛选器" className="h-6 w-6 border border-[#adadad] bg-[#e1e1e1] leading-4">
          ...
        </button>
      </div>
      <label htmlFor={`${id}-value`} className="mt-[9px] leading-4">
        数值: (V)
      </label>
      <div className="mt-[5px] h-[25px] border border-white border-t-[#a0a0a0] border-l-[#a0a0a0] pr-px pb-[2px]">
        <input id={`${id}-value`} type="text" className="block h-[21px] w-full border border-[#696969] bg-[#f0f0f0] px-1 outline-none" />
      </div>
      <div className="mt-[9px] flex min-h-0 flex-1 flex-col">
        <Tree nodes={nodes} />
      </div>
    </div>
    <Tabs tall={up} />
  </section>
);

const Splitter = () => <div className="w-[5px] shrink-0 border-r-2 border-[#696969] bg-[#cfd7ea]" />;

const Breaker = () => (
  <svg viewBox="0 0 1200 1410" width={400} height={470} className="absolute top-[136px] left-[233px]" role="img" aria-label="3D">
    <g stroke="#000" strokeWidth="3" strokeLinejoin="round">
      <path d="M756 49L1121 232L905 335L578 141Z" fill="#3b3b3b" />
      <path d="M1121 232L1124 464L1085 485V850L1124 866V1116L908 1222L881 1187V348Z" fill="#454545" />
      <path d="M1085 847L1124 866L1085 886Z" fill="#3b3b3b" />
      <path d="M535 122L905 305L908 312V335L700 430L345 260V222Q347 214 360 208Z" fill="#403f3e" />
      <path d="M578 141L905 302" fill="none" strokeWidth="4" />
      <path
        d="M270 295L358 250L460 214L488 222L500 250L560 280L604 278L618 305L680 338L720 334L735 362L770 368L708 400L706 440L632 475Z"
        fill="#2f353f"
        stroke="none"
      />
      <path d="M345 258L270 295L632 475L706 440" fill="none" />
      <path d="M270 295L632 475V692L270 513V445L281 440V423L270 418Z" fill="#373e48" />
      <path d="M632 475L706 440V770L738 760V825L706 850V1330L632 1360L440 1240V800L450 788L643 692L632 680Z" fill="#373f48" />
      <path d="M708 400Q710 390 720 384L900 305L908 312V335L881 348V726L928 706V763L885 782L881 790V1187H908L905 1258L895 1270L718 1357L706 1345V850L738 830V760L708 770Z" fill="#454545" />
      <path d="M690 1340L706 1330V1345Z" fill="#3b3b3b" />
      <path d="M270 300L632 480M270 400L632 578M270 418L632 598M281 423L643 602M281 440L636 612M270 445L643 628" fill="none" />
      <path d="M632 475V598M643 600V624L632 628V680M636 680L643 692" fill="none" />
      <path d="M88 605L276 513L643 692L450 788Z" fill="#2e343d" />
      <path d="M266 1140V1178L632 1360V1147L450 1235Z" fill="#353c44" />
      <path d="M88 605L450 788L448 838L436 960L440 1120L448 1235L83 1050L72 920V800L83 660V615Z" fill="#363d48" />
    </g>
    <path d="M86 662L148 910L72 800Z" fill="#424957" />
    <path d="M86 662L235 885L148 910Z" fill="#3c4350" />
    <path d="M72 800L130 930L74 930Z" fill="#3b4250" />
    <path d="M86 662L448 838L370 950L250 890Z" fill="#39414b" />
    <path d="M365 1065L440 1215L352 1155Z" fill="#424957" />
    <path d="M390 1040L440 1110V1215Z" fill="#30363f" />
    <g stroke="#000" strokeWidth="3" fill="none" strokeLinejoin="round">
      <path d="M86 614L450 797M83 658L448 838M450 788V838" />
      <path d="M707 440V770M707 850V1340M738 760V825" strokeWidth="5" />
      <path d="M632 1147L460 1235M448 1235L470 1238L478 1226M325 1170L335 1184L348 1180" />
      <path d="M176 1005L180 1072L352 1156V1104L340 1080L330 1075M188 1010L190 1066L352 1146" />
    </g>
    <g stroke="#000" strokeWidth="3" strokeLinejoin="round">
      <path d="M484 202L510 190L568 218L540 240L486 218Z" fill="#3d3b3a" />
      <path d="M602 260L626 246L688 276L655 298L604 276Z" fill="#3d3b3a" />
      <path d="M718 318L742 304L802 334L770 356L720 334Z" fill="#3d3b3a" />
      <path d="M490 204L560 236M606 262L672 296M722 320L786 350" fill="none" />
      <path d="M458 236L488 224V240L500 248L478 244ZM575 292L604 280V296L618 305L594 302ZM690 350L720 338V352L735 362L708 360Z" fill="#2b3038" />
      <path d="M345 258V222Q347 212 360 208L475 165L484 200L460 216L360 262Z" fill="#464341" />
      <path d="M358 262V234Q358 224 366 218M345 228Q350 222 358 228" fill="none" />
      <path d="M462 314V280Q465 270 480 266L576 216L592 222L604 258L578 274L475 322Z" fill="#464341" />
      <path d="M475 322V294Q476 284 486 278M462 284Q468 280 475 288" fill="none" />
      <path d="M578 372V340Q582 330 596 326L692 276L708 282L720 316L690 336L592 380Z" fill="#464341" />
      <path d="M592 380V352Q594 342 604 336M579 344Q586 338 592 346" fill="none" />
      <path d="M696 436V400Q700 388 712 384L800 340L905 305L720 386Q709 392 708 405V440Z" fill="#464341" />
      <path d="M475 165L576 214M592 222L692 272M708 282L810 331" strokeWidth="5" fill="none" />
    </g>
    <g stroke="#000" strokeWidth="3" fill="#363d47">
      <path d="M305 378L318 360L336 362L356 378L362 405L354 428L332 430L312 412Z" />
      <path d="M421 438L434 418L452 420L472 436L480 463L470 488L448 490L428 472Z" />
      <path d="M537 496L550 476L568 478L588 494L595 520L586 548L564 548L545 530Z" />
      <path d="M538 1236L548 1226H565L588 1252L590 1290L568 1298L546 1284Z" />
    </g>
    <path
      d="M312 380L330 376L354 404L350 424L334 428L318 408ZM430 438L450 434L472 462L466 484L450 488L434 468ZM546 496L566 492L588 520L582 544L566 546L550 526ZM542 1272L575 1242L586 1256L586 1276Z"
      fill="#414857"
    />
    <g stroke="#000" strokeWidth="3" fill="none">
      <path d="M656 538L680 526V566L656 580ZM664 538V572L680 562M661 1288L680 1278V1318L661 1328ZM668 1290V1318H678" />
      <path d="M1040 296L1064 285V336L1040 350ZM1050 294V340M1040 1082L1064 1072V1124L1040 1138ZM1050 1080V1126" />
      <path d="M911 465L935 452V515L922 530L911 528ZM920 464V524M911 1030L935 1018V1080L922 1096L911 1092ZM920 1030V1088" />
      <path d="M881 348L908 335M881 1187H908V1222M690 1340L706 1345" />
    </g>
    <path d="M201 667L328 730V777L201 714Z" fill="#0d6b66" stroke="#000" strokeWidth="4" />
    <path d="M205 680L322 738V762L205 704Z" fill="#000" />
    <text transform="matrix(1 0.496 0 1 206 702)" fontSize="25" fontWeight="700" fontFamily="Liberation Sans, sans-serif" fill="#d8d8d8">
      SIEMENS
    </text>
    <g stroke="#000" strokeWidth="3" strokeLinejoin="round">
      <path d="M254 905Q262 880 290 876L320 880L345 905L374 950V970L300 940Z" fill="#292929" />
      <path d="M320 880Q300 890 302 940M308 890L350 925L368 965" fill="none" />
      <path d="M116 940L128 922L204 890L252 906L424 992V1028L330 1078Q240 1045 170 1005L120 962Z" fill="#222222" />
      <path d="M116 940L250 984L330 1036L424 992M330 1036V1078M128 922L148 932L220 904L204 890M136 938L330 1036" fill="none" />
    </g>
  </svg>
);

const AxisTriad = () => (
  <svg viewBox="0 0 28 40" width={28} height={40} className="absolute bottom-[35px] left-[54px]" aria-hidden="true">
    <path d="M6 26V10" stroke="#1414a8" strokeWidth="2" />
    <path d="M6 0L10 11H2Z" fill="#0000c8" />
    <path d="M6 25L18 18" stroke="#00a000" strokeWidth="3" />
    <path d="M16 14L27 14L21 23Z" fill="#008c00" />
    <path d="M6 25L18 32" stroke="#a80000" strokeWidth="3" />
    <path d="M21 28L27 36L16 35Z" fill="#d00000" />
  </svg>
);

const Viewport = () => (
  <main className="flex min-w-0 flex-1 flex-col border-t-2 border-r border-[#a0a0a0] bg-[#f0f0f0] pt-[7px] pr-[5px] pl-2">
    <div className="flex min-h-0 flex-1 border-r-2 border-b-2 border-l border-t border-black border-t-white border-l-white p-1 pr-[5px] pb-[5px]">
      <div className="relative min-w-0 flex-1 overflow-hidden border border-t-2 border-white border-t-[#696969] border-l-[#696969] bg-linear-to-b from-white to-[#bebebe]">
        <Breaker />
        <AxisTriad />
      </div>
    </div>
    <div role="tablist" className="flex h-[15px] shrink-0 items-start">
      <button
        role="tab"
        type="button"
        aria-selected="true"
        className="relative -mt-[2px] ml-px flex h-6 w-[95px] items-center border-r border-black bg-[#f0f0f0] pl-1"
      >
        <CubeGray />
        <span className="ml-[34px]">1</span>
      </button>
    </div>
  </main>
);

const EDGE = [26, 38, 60, 94, 115, 148, 160, 188, 221, 244, 274, 292];
const RightStrip = () => (
  <aside className="w-[10px] shrink-0 overflow-hidden bg-white">
    <svg viewBox="0 0 10 330" width={10} height={330} aria-hidden="true">
      <path d="M6 5.5H8" stroke="#b8b8b8" />
      <path d="M4 106.5H10M4 206.5H10M4 260.5H10" stroke="#b8b8b8" />
      <path d="M1 316.5H10" stroke="#d8d8d8" />
      <path d="M9 15V27M9 60V73M9 150V164" stroke="#a6a6a6" strokeWidth="2" />
      {EDGE.map((y) => (
        <g key={y}>
          <rect x="7" y={y} width="3" height="4" fill="#a6a6a6" />
          <rect x="8" y={y + 1} width="1" height="2" fill="#ffe000" />
        </g>
      ))}
    </svg>
  </aside>
);

const SideTools = () => (
  <div role="toolbar" aria-orientation="vertical" className="w-[32px] shrink-0 overflow-hidden border-r border-[#a0a0a0] bg-white">
    <div className="flex flex-col items-center border-b border-[#d8d8d8] pr-[2px] pb-[6px]">
      <span className="my-1 w-5 border-t border-dotted border-[#b8b8b8]" />
      {COLUMN.split(" ").map((id, i) => {
        if (id === "|")
          return (
            <span key={i} className="flex h-2 w-full items-center px-1">
              <span className="h-px flex-1 bg-[#b8b8b8]" />
            </span>
          );
        if (id === ":")
          return (
            <span key={i} className="flex h-[17px] w-full flex-col items-center border-[#d8d8d8] pt-[6px]">
              <span className="h-px w-full bg-[#d8d8d8]" />
              <span className="mt-[5px] w-5 border-t border-dotted border-[#b8b8b8]" />
            </span>
          );
        return <ToolButton key={i} id={id} />;
      })}
    </div>
  </div>
);

const PAGE_TREE: Node[] = [
  { label: "测试宏项目", depth: 0, selected: true },
  { label: "测试多线原理图", depth: 0 },
];
const LAYOUT_TREE: Node[] = [
  { label: "测试宏项目", depth: 0, toggle: "-", selected: true },
  { label: "1", depth: 1, toggle: "+", cube: true },
  { label: "测试多线原理图", depth: 0, toggle: "+" },
];
const DEVICE_TREE: Node[] = [
  { label: "测试宏项目", depth: 0, toggle: "+", selected: true },
  { label: "测试多线原理图", depth: 0, toggle: "+" },
];

export default function App() {
  return (
    <div className="flex h-screen flex-col overflow-hidden bg-white font-['Noto_Sans','Noto_Sans_CJK_SC',sans-serif] text-[12px] leading-4 text-black">
      <MenuBar />
      <div className="shrink-0 border-b border-[#d8d8d8]">
        <ToolRow items={ROW1} />
        <ToolRow items={ROW2} />
        <div className="-mb-px">
          <ToolRow items={ROW3} />
        </div>
      </div>
      <div className="flex min-h-0 flex-1">
        <div className="flex w-[285px] shrink-0 flex-col overflow-hidden">
          <Panel id="pages" title="页 - 测试宏项目" nodes={PAGE_TREE} up className="mr-1 -ml-2 h-[432px]" />
          <div className="h-2 shrink-0 border-t-2 border-b-2 border-t-[#dcdcdc] border-b-[#696969] bg-[#cfd7ea]" />
          <section className="-ml-2 flex min-h-0 flex-1 flex-col">
            <PanelTitle title="图形预览" up className="mr-1" />
            <div className="mr-1 flex-1 border-t-2 border-r border-[#a0a0a0] border-r-white bg-[#f0f0f0]" />
          </section>
        </div>
        <Splitter />
        <SideTools />
        <Panel id="layout" title="布局空间 - 测试宏项目" nodes={LAYOUT_TREE} className="mr-[3px] ml-[6px] w-[257px] shrink-0" />
        <Splitter />
        <Panel id="devices" title="设备 - 测试宏项目" nodes={DEVICE_TREE} className="mr-[3px] ml-[5px] w-[257px] shrink-0" />
        <Splitter />
        <Viewport />
        <RightStrip />
      </div>
    </div>
  );
}
